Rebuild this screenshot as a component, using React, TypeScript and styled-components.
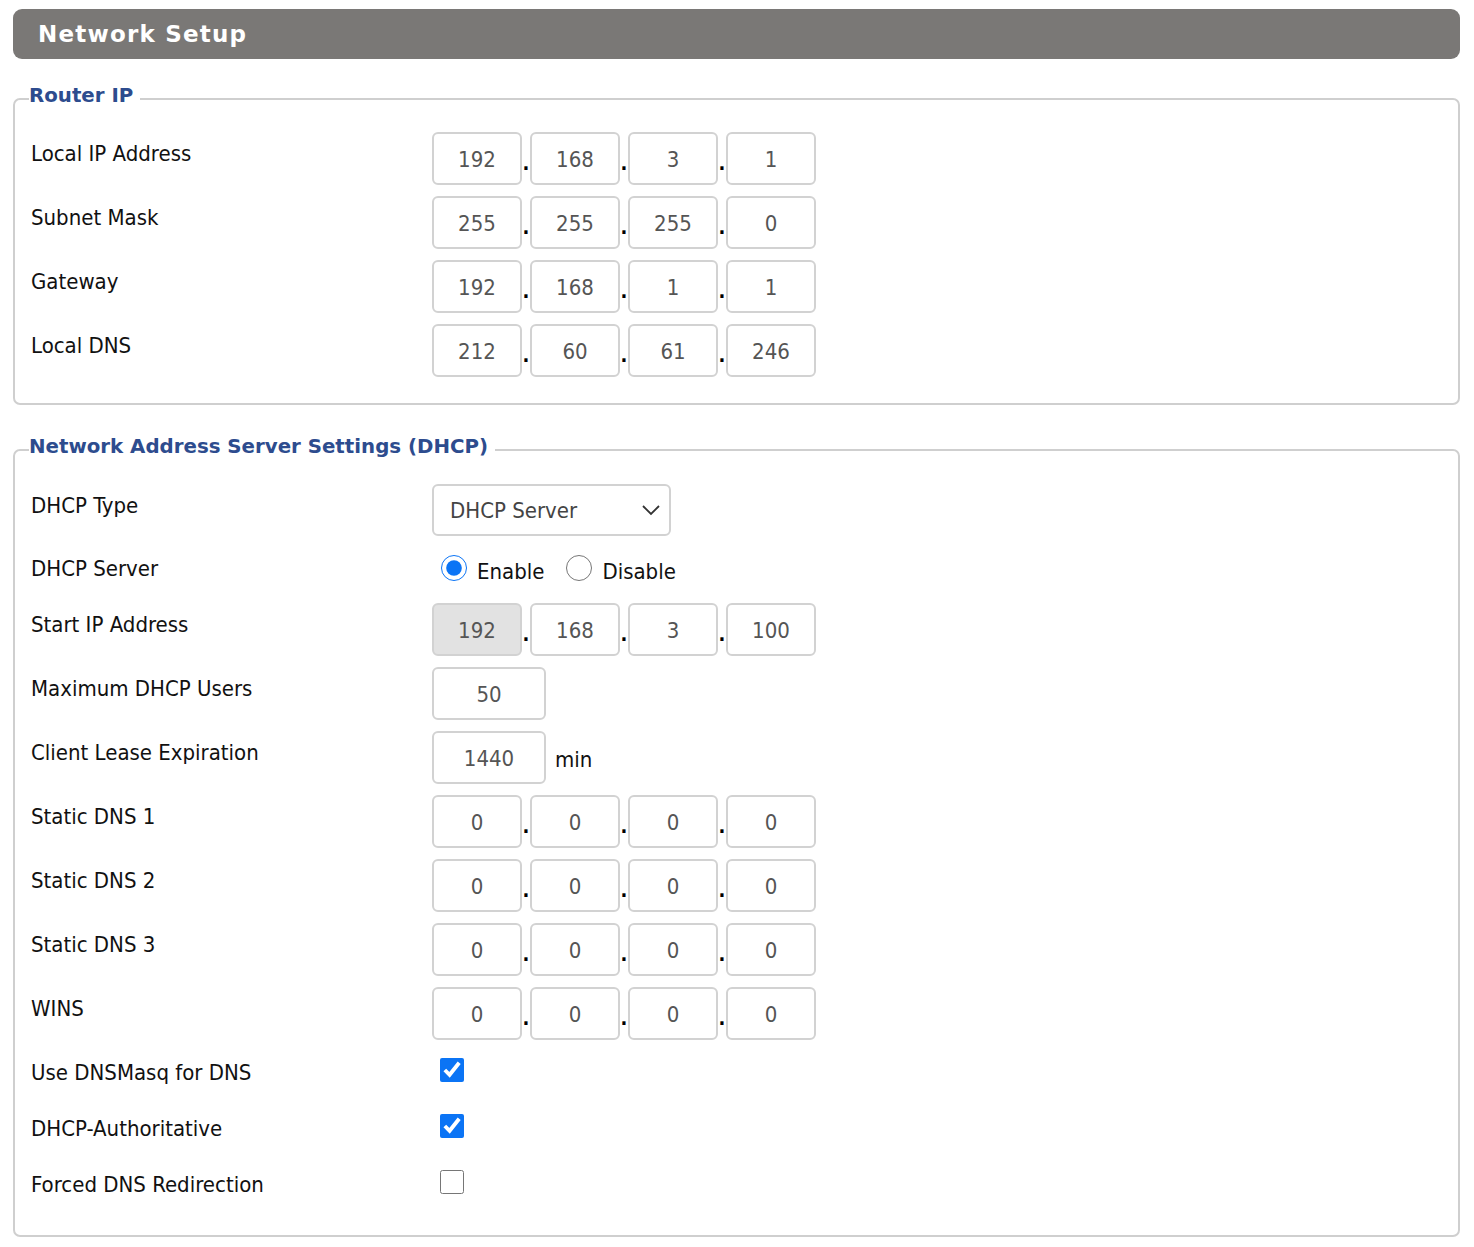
import React from "react";
import styled, { createGlobalStyle } from "styled-components";

const GlobalStyle = createGlobalStyle`
  html, body {
    margin: 0;
    padding: 0;
    background: #ffffff;
  }
  body {
    font-family: "DejaVu Sans Condensed", "DejaVu Sans", sans-serif;
    color: #111;
  }
`;

// Layout
const Page = styled.div`
  padding: 9px 14px 10px 13px;
  display: flex;
  flex-direction: column;
`;

const HeaderBar = styled.div`
  height: 50px;
  background: #7a7876;
  border-radius: 9px;
  display: flex;
  align-items: center;
  padding-left: 25px;
  color: #ffffff;
  font-family: "DejaVu Sans", Verdana, sans-serif;
  font-weight: bold;
  font-size: 23px;
  letter-spacing: 1.2px;
`;

const Fieldset = styled.fieldset<{ $top: number; $padTop?: number; $padBottom?: number }>`
  margin: ${(p) => p.$top}px 0 0 0;
  border: 2px solid #cfcfcf;
  border-radius: 7px;
  padding: ${(p) => p.$padTop ?? 18}px 16px ${(p) => p.$padBottom ?? 26}px 16px;
  min-width: 0;
`;

const Legend = styled.legend`
  color: #2d4c8e;
  font-family: "DejaVu Sans", Verdana, sans-serif;
  font-weight: bold;
  font-size: 19.8px;
  line-height: 26px;
  padding: 0 7px 5px 0;
  margin-left: -2px;
`;

const Rows = styled.div`
  display: flex;
  flex-direction: column;
  gap: 11px;
`;

const Row = styled.div<{ $h?: number }>`
  display: grid;
  grid-template-columns: 401px 1fr;
  align-items: start;
  min-height: ${(p) => p.$h ?? 53}px;
`;

const Label = styled.div`
  padding-top: 10px;
  font-size: 22px;
  line-height: 24px;
  color: #111;
`;

const Controls = styled.div`
  display: flex;
  align-items: center;
`;

const Octet = styled.input<{ $w?: number }>`
  box-sizing: border-box;
  width: ${(p) => p.$w ?? 90}px;
  height: 53px;
  border: 2px solid #d2d2d2;
  border-radius: 6px;
  background: #ffffff;
  color: #555555;
  font-family: "DejaVu Sans Condensed", "DejaVu Sans", sans-serif;
  font-size: 22px;
  text-align: center;
  padding: 2px 0 0 0;
  outline: none;
  &:disabled {
    background: #e2e2e2;
    color: #555555;
  }
`;

const Dot = styled.span`
  width: 8px;
  align-self: flex-end;
  padding-bottom: 14px;
  font-size: 20px;
  line-height: 16px;
  font-weight: bold;
  color: #000;
  text-align: center;
`;

const Unit = styled.span`
  margin-left: 9px;
  margin-top: 4px;
  font-size: 22px;
  color: #111;
`;

const SelectWrap = styled.div`
  position: relative;
  width: 239px;
  height: 52px;
`;

const Select = styled.select`
  appearance: none;
  box-sizing: border-box;
  width: 100%;
  height: 100%;
  border: 2px solid #d2d2d2;
  border-radius: 6px;
  background: #ffffff;
  color: #444;
  font-family: "DejaVu Sans Condensed", "DejaVu Sans", sans-serif;
  font-size: 22px;
  padding: 0 0 0 16px;
  outline: none;
`;

const Chevron = styled.svg`
  position: absolute;
  right: 10px;
  top: 20px;
  pointer-events: none;
`;

const RadioGroup = styled.div`
  display: flex;
  align-items: center;
  height: 45px;
  padding-left: 9px;
`;

const RadioLabel = styled.label`
  display: flex;
  align-items: center;
  margin-right: 22px;
  font-size: 22px;
  padding-top: 4px;
  color: #111;
`;

const Radio = styled.input`
  width: 26px;
  height: 26px;
  margin: -8px 10px 0 0;
  accent-color: #0b74f5;
`;

const Check = styled.input`
  width: 24px;
  height: 24px;
  margin: 7px 0 0 8px;
  accent-color: #0b74f5;
`;

type IpRowProps = { label: string; values: string[]; firstDisabled?: boolean };

const IpRow = ({ label, values, firstDisabled }: IpRowProps) => (
  <Row>
    <Label>{label}</Label>
    <Controls>
      {values.map((v, i) => (
        <React.Fragment key={i}>
          {i > 0 && <Dot>.</Dot>}
          <Octet defaultValue={v} disabled={firstDisabled && i === 0} />
        </React.Fragment>
      ))}
    </Controls>
  </Row>
);

const CheckRow = ({ label, checked }: { label: string; checked: boolean }) => (
  <Row $h={45}>
    <Label>{label}</Label>
    <Controls>
      <Check type="checkbox" defaultChecked={checked} />
    </Controls>
  </Row>
);

export default function App() {
  return (
    <Page>
      <GlobalStyle />
      <HeaderBar>Network Setup</HeaderBar>

      <Fieldset $top={24}>
        <Legend>Router IP</Legend>
        <Rows>
          <IpRow label="Local IP Address" values={["192", "168", "3", "1"]} />
          <IpRow label="Subnet Mask" values={["255", "255", "255", "0"]} />
          <IpRow label="Gateway" values={["192", "168", "1", "1"]} />
          <IpRow label="Local DNS" values={["212", "60", "61", "246"]} />
        </Rows>
      </Fieldset>

      <Fieldset $top={29} $padTop={19} $padBottom={27}>
        <Legend>Network Address Server Settings (DHCP)</Legend>
        <Rows>
          <Row $h={52}>
            <Label>DHCP Type</Label>
            <Controls>
              <SelectWrap>
                <Select defaultValue="server">
                  <option value="server">DHCP Server</option>
                  <option value="forwarder">DHCP Forwarder</option>
                </Select>
                <Chevron width="20" height="12" viewBox="0 0 20 12">
                  <path d="M2 2 L10 10 L18 2" fill="none" stroke="#333" strokeWidth="1.8" />
                </Chevron>
              </SelectWrap>
            </Controls>
          </Row>
          <Row $h={45}>
            <Label>DHCP Server</Label>
            <RadioGroup>
              <RadioLabel>
                <Radio type="radio" name="dhcp" defaultChecked />
                Enable
              </RadioLabel>
              <RadioLabel>
                <Radio type="radio" name="dhcp" />
                Disable
              </RadioLabel>
            </RadioGroup>
          </Row>
          <IpRow label="Start IP Address" values={["192", "168", "3", "100"]} firstDisabled />
          <Row>
            <Label>Maximum DHCP Users</Label>
            <Controls>
              <Octet $w={114} defaultValue="50" />
            </Controls>
          </Row>
          <Row>
            <Label>Client Lease Expiration</Label>
            <Controls>
              <Octet $w={114} defaultValue="1440" />
              <Unit>min</Unit>
            </Controls>
          </Row>
          <IpRow label="Static DNS 1" values={["0", "0", "0", "0"]} />
          <IpRow label="Static DNS 2" values={["0", "0", "0", "0"]} />
          <IpRow label="Static DNS 3" values={["0", "0", "0", "0"]} />
          <IpRow label="WINS" values={["0", "0", "0", "0"]} />
          <CheckRow label="Use DNSMasq for DNS" checked />
          <CheckRow label="DHCP-Authoritative" checked />
          <CheckRow label="Forced DNS Redirection" checked={false} />
        </Rows>
      </Fieldset>
    </Page>
  );
}
